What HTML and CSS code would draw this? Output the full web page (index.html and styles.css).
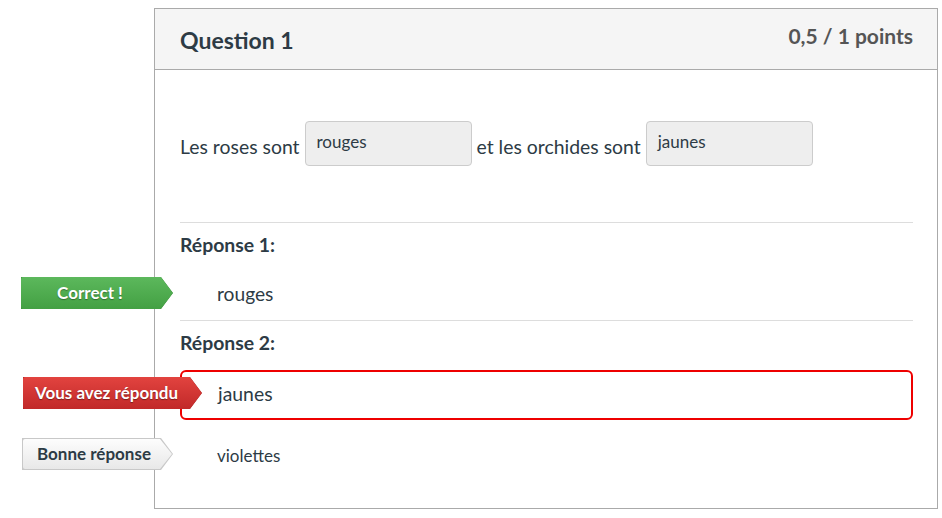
FILE: index.html
```html
<!DOCTYPE html>
<html lang="fr">
<head>
  <meta charset="UTF-8" />
  <title>Question 1</title>
  <link rel="stylesheet" href="styles.css">
</head>
<body>

  <!-- Question card -->
  <div class="question">
    <div class="question-header">
      <span class="question-title">Question 1</span>
      <span class="question-points">0,5 / 1 points</span>
    </div>

    <div class="question-body">
      <div class="sentence">
        <span class="words">Les roses sont</span>
        <span class="blank">rouges</span>
        <span class="words">et les orchides sont</span>
        <span class="blank">jaunes</span>
      </div>

      <div class="answers">
        <div class="answer-group">
          <div class="answer-label">Réponse 1:</div>
          <div class="answer correct">
            <span class="badge badge-green"><span>Correct !</span></span>
            rouges
          </div>
        </div>

        <div class="answer-group">
          <div class="answer-label">Réponse 2:</div>
          <div class="answer chosen">
            <span class="badge badge-red"><span>Vous avez répondu</span></span>
            jaunes
          </div>
          <div class="answer right small">
            <span class="badge badge-grey"><span>Bonne réponse</span></span>
            violettes
          </div>
        </div>
      </div>
    </div>
  </div>

</body>
</html>
```

FILE: styles.css
```css
body { font-family: 'Lato', sans-serif; background: #fff; margin: 0; padding: 0; color: #2d3b45; }

.question {
  box-sizing: border-box; width: 784px; height: 501px;
  margin: 8px 0 0 154px; border: 1px solid #aaa;
}
.question-header {
  display: flex; align-items: center; justify-content: space-between;
  height: 60px; padding: 0 24px 0 25px;
  background: #f5f5f5; border-bottom: 1px solid #aaa;
}
.question-title { font-size: 23px; font-weight: bold; padding-top: 2px; }
.question-points { font-size: 21px; font-weight: bold; color: #555; padding-bottom: 8px; }

.question-body { padding: 51px 24px 0 25px; }

.sentence { display: flex; align-items: center; height: 44px; }
.sentence .words { font-size: 19.4px; margin-top: 7px; }
.blank {
  box-sizing: border-box; width: 167px; height: 45px; margin: 0 5px 0 5px;
  padding: 10px 11px 0; line-height: 20px; font-size: 17px;
  background: #eee; border: 1px solid #ccc; border-radius: 4px;
}

.answers { margin-top: 57px; }
.answer-group { border-top: 1px solid #ddd; }
.answer-label { font-size: 19.4px; font-weight: bold; line-height: 24px; padding-top: 10px; }

.answer {
  position: relative; display: flex; align-items: center;
  box-sizing: border-box; height: 50px; padding-left: 37px; font-size: 19.2px;
}
.answer.correct { margin: 12px 0 1px; padding-bottom: 1px; }
.answer.chosen {
  margin-top: 15px; padding: 0 0 3px 36px; font-size: 19.4px;
  border: 2px solid #e00; border-radius: 6px;
}
.answer.small { font-size: 17px; margin-top: 10px; }

.badge {
  position: absolute; top: calc(50% - 17px);
  height: 32px; font-size: 17px; font-weight: bold;
  clip-path: polygon(0 0, calc(100% - 12px) 0, 100% 50%, calc(100% - 12px) 100%, 0 100%);
}
.badge span {
  display: flex; align-items: center; box-sizing: border-box; height: 100%;
  padding: 0 0 2px 12px; border-radius: 2px 0 0 2px;
  clip-path: polygon(0 0, calc(100% - 12px) 0, 100% 50%, calc(100% - 12px) 100%, 0 100%);
}
.badge-green { left: -159px; width: 152px; background: #3a8a3a; }
.badge-green span {
  justify-content: center; padding: 0 14px 2px 0;
  background: linear-gradient(#5cb85c, #43a043); color: #fff;
  text-shadow: 0 1px 1px rgba(0, 0, 0, 0.35);
}
.badge-red { left: -159px; width: 179px; top: calc(50% - 18px); background: #a52020; }
.badge-red span {
  background: linear-gradient(#e2433f, #c12929); color: #fff;
  text-shadow: 0 1px 1px rgba(0, 0, 0, 0.4);
}
.badge-grey { left: -158px; width: 151px; background: #c8c8c8; }
.badge-grey span {
  margin: 1px; height: 30px; width: 149px; padding-left: 14px;
  background: linear-gradient(#fdfdfd, #e8e8e8); color: #2d3b45;
}
```
